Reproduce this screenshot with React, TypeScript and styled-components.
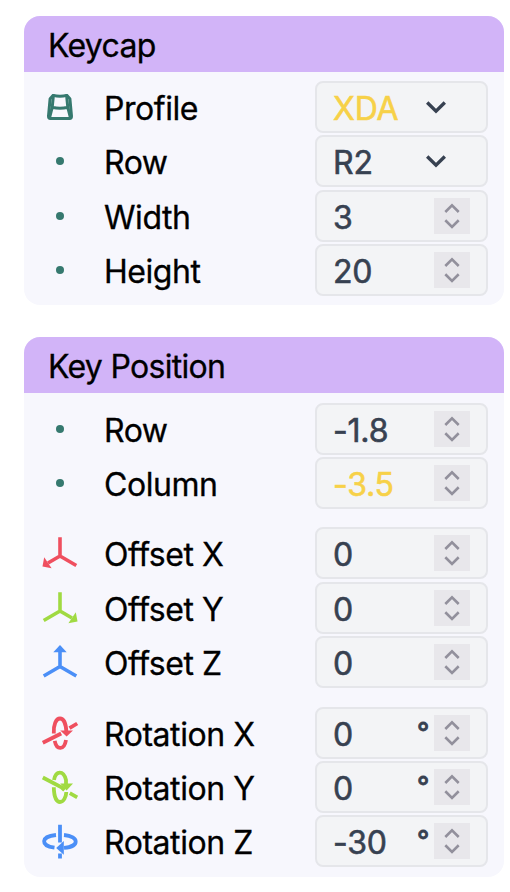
import React from 'react';
import styled, { createGlobalStyle } from 'styled-components';

const GlobalStyle = createGlobalStyle`
  * { box-sizing: border-box; }
  body { margin: 0; background: #fff; font-family: Inter, sans-serif; }
`;

const Page = styled.main`
  display: flex;
  flex-direction: column;
  gap: 32px;
  padding: 16px 6px 15px 24px;
`;

const Card = styled.section`
  border-radius: 16px;
  overflow: hidden;
  background: #f7f7fd;
`;

const CardHeader = styled.h2`
  margin: 0;
  height: 56px;
  padding: 1px 24px 0;
  font-size: 32px;
  font-weight: 400;
  letter-spacing: -0.7px;
  line-height: 57px;
  color: #000;
  -webkit-text-stroke: 0.3px currentColor;
  background: #d2b4f8;
`;

const Groups = styled.div<{ $pad: number }>`
  display: flex;
  flex-direction: column;
  gap: 18.5px;
  padding: ${p => p.$pad}px 16px ${p => p.$pad}px 18px;
`;

const Group = styled.div`
  display: flex;
  flex-direction: column;
  gap: 2.33px;
`;

const Row = styled.div`
  display: grid;
  grid-template-columns: 36px 1fr 173px;
  align-items: center;
  height: 52px;
`;

const Icon = styled.svg`
  display: block;
  width: 36px;
  height: 36px;
  fill: none;
  overflow: visible;
`;

const Label = styled.label`
  padding-left: 26px;
  font-size: 32px;
  letter-spacing: -0.45px;
  line-height: 48px;
  padding-top: 4px;
  color: #000;
  -webkit-text-stroke: 0.3px currentColor;
`;

const Field = styled.div<{ $changed?: boolean }>`
  display: flex;
  align-items: center;
  height: 52px;
  padding: 0 16px;
  border: 2px solid #e5e6ea;
  border-radius: 8px;
  background: #f3f4f6;
  color: ${p => (p.$changed ? '#f7d148' : '#374151')};
  font-size: 32px;
  letter-spacing: -0.2px;
  line-height: 48px;
  -webkit-text-stroke: 0.6px currentColor;
`;

const Value = styled.span`
  flex: 1;
  padding-top: 4px;
`;

const Unit = styled.span`
  margin-right: 5px;
  font-size: 27px;
  line-height: 48px;
  -webkit-text-stroke: 1px currentColor;
`;

const Spinner = styled.span`
  width: 36px;
  height: 36px;
  background: #e8e7eb;
`;

const SelectArrow = styled.svg`
  width: 24px;
  height: 24px;
  margin-right: 22px;
  fill: none;
  stroke: #374151;
  stroke-width: 3.4;
`;

const RED = '#ef4f5f';
const GREEN = '#a0da42';
const BLUE = '#4b8ff7';
const TEAL = '#36796f';

type IconName = 'keycap' | 'dot' | 'ox' | 'oy' | 'oz' | 'rx' | 'ry' | 'rz';

const glyphs: Record<IconName, React.ReactNode> = {
  keycap: (
    <g stroke={TEAL} strokeWidth="3" strokeLinejoin="round" strokeLinecap="round">
      <path d="M11.2 6.4Q18 8.1 24.8 6.4L27.9 9.7L29.5 27.2Q29.7 29.5 27.5 29.5H8.5Q6.3 29.5 6.5 27.2L8.1 9.7Z" />
      <path d="M11.4 6.6L10.2 18.3L7.6 28.6M24.6 6.6L25.8 18.3L28.4 28.6M10.2 18.3Q18 20.2 25.8 18.3" />
    </g>
  ),
  dot: <circle cx="18" cy="18" r="4" fill={TEAL} />,
  ox: (
    <>
      <path d="M18 2.3V21L34.3 30.5M18 21L6 28" stroke={RED} strokeWidth="3.6" />
      <path d="M.5 31.6L2.2 22.3L9.6 33.3Z" fill={RED} />
    </>
  ),
  oy: (
    <>
      <path d="M18 2.3V21L1.7 30.5M18 21L30 28" stroke={GREEN} strokeWidth="3.6" />
      <path d="M35.5 31.6L33.8 22.3L26.4 33.3Z" fill={GREEN} />
    </>
  ),
  oz: (
    <>
      <path d="M18 7V22.5L34.3 32M18 22.5L1.7 32" stroke={BLUE} strokeWidth="3.6" />
      <path d="M18 1L24.7 8.2H11.3Z" fill={BLUE} />
    </>
  ),
  rx: (
    <g stroke={RED} strokeWidth="3.8">
      <path d="M.8 27.8L19.2 18.5M27.5 13.2L35.2 8.5" />
      <path d="M11.8 18.5C11.3 10 14 3.5 18 3.5C21.5 3.5 24 8.5 24.4 17M12.7 25.8C14.8 35.7 22.3 35.2 24 25" />
      <path d="M18.2 15.6H31L24.6 21.5Z" fill={RED} stroke="none" />
    </g>
  ),
  ry: (
    <g stroke={GREEN} strokeWidth="3.8">
      <path d="M.8 8.5L19.5 18.4L22.5 21.2M27.8 24.2L35.2 28.3" />
      <path d="M12 11C13.8 1.3 21.5 1 24 11V16M11.8 18.2C12 28 14.5 33 18 33C21.5 33 24.2 28 24.3 23" />
      <path d="M18.2 14.5H31L24.6 21.5Z" fill={GREEN} stroke="none" />
    </g>
  ),
  rz: (
    <g stroke={BLUE} strokeWidth="3.8">
      <path d="M18 1.8V19.5M18 30.5V35.5" />
      <path d="M14 12C-1.5 13.4-1.7 22.8 12.5 24.7M22 12C37.4 13.4 37.8 23.5 22 24.9" />
      <path d="M14.2 24.9L21.8 18V31.8Z" fill={BLUE} stroke="none" />
    </g>
  ),
};

interface RowData {
  icon: IconName;
  label: string;
  value: string;
  changed?: boolean;
  select?: boolean;
  unit?: string;
}

const SettingRow = ({ icon, label, value, changed, select, unit }: RowData) => (
  <Row>
    <Icon viewBox="0 0 36 36">{glyphs[icon]}</Icon>
    <Label>{label}</Label>
    <Field $changed={changed}>
      <Value>{value}</Value>
      {unit && <Unit>{unit}</Unit>}
      {select ? (
        <SelectArrow viewBox="0 0 24 24">
          <path d="M3.2 7.5L12 16.2L20.8 7.5" />
        </SelectArrow>
      ) : (
        <Spinner>
          <Icon viewBox="0 0 36 36">
            <path d="M11.3 14L18 7.4L24.7 14M11.3 22.3L18 28.9L24.7 22.3" stroke="#92909c" strokeWidth="2.6" />
          </Icon>
        </Spinner>
      )}
    </Field>
  </Row>
);

const Panel = ({ title, groups, pad }: { title: string; groups: RowData[][]; pad: number }) => (
  <Card>
    <CardHeader>{title}</CardHeader>
    <Groups $pad={pad}>
      {groups.map((rows, i) => (
        <Group key={i}>
          {rows.map(row => (
            <SettingRow key={row.label} {...row} />
          ))}
        </Group>
      ))}
    </Groups>
  </Card>
);

const keycap: RowData[][] = [
  [
    { icon: 'keycap', label: 'Profile', value: 'XDA', changed: true, select: true },
    { icon: 'dot', label: 'Row', value: 'R2', select: true },
    { icon: 'dot', label: 'Width', value: '3' },
    { icon: 'dot', label: 'Height', value: '20' },
  ],
];

const position: RowData[][] = [
  [
    { icon: 'dot', label: 'Row', value: '-1.8' },
    { icon: 'dot', label: 'Column', value: '-3.5', changed: true },
  ],
  [
    { icon: 'ox', label: 'Offset X', value: '0' },
    { icon: 'oy', label: 'Offset Y', value: '0' },
    { icon: 'oz', label: 'Offset Z', value: '0' },
  ],
  [
    { icon: 'rx', label: 'Rotation X', value: '0', unit: '°' },
    { icon: 'ry', label: 'Rotation Y', value: '0', unit: '°' },
    { icon: 'rz', label: 'Rotation Z', value: '-30', unit: '°' },
  ],
];

export default function App() {
  return (
    <>
      <GlobalStyle />
      <Page>
        <Panel title="Keycap" groups={keycap} pad={9} />
        <Panel title="Key Position" groups={position} pad={9.65} />
      </Page>
    </>
  );
}
